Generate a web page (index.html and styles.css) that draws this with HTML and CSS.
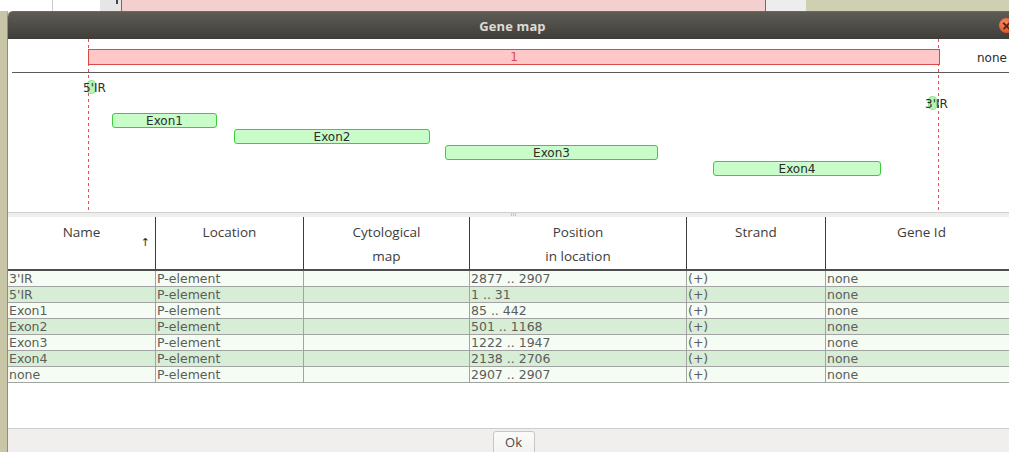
FILE: index.html
```html
<!DOCTYPE html>
<html>
<head>
<meta charset="utf-8">
<title>Gene map</title>
<link rel="stylesheet" href="styles.css">
</head>
<body>
<div class="screen">
  <div class="behind">
    <span class="bh-white"></span>
    <span class="bh-rule"></span>
    <span class="bh-white2"></span>
    <span class="bh-cell"><span class="bh-mark"></span></span>
    <span class="bh-pink"></span>
    <span class="bh-cell2"><span class="bh-mark wide"></span></span>
    <span class="bh-khaki"></span>
  </div>
  <div class="main">
    <div class="side"></div>
    <div class="window">
      <div class="titlebar">
        <span class="title">Gene map</span>
        <span class="close"></span>
      </div>

      <div class="map">
        <div class="vline vline-start"></div>
        <div class="vline vline-end"></div>
        <div class="locus">1</div>
        <div class="locus-name">none</div>
        <div class="axis"><span class="axis-head"></span></div>

        <div class="feat feat-small ir5"></div>
        <div class="feat-label ir5-label">5'IR</div>
        <div class="feat feat-small ir3"></div>
        <div class="feat-label ir3-label">3'IR</div>

        <div class="feat exon1">Exon1</div>
        <div class="feat exon2">Exon2</div>
        <div class="feat exon3">Exon3</div>
        <div class="feat exon4">Exon4</div>
      </div>

      <div class="splitter"><span class="grip"></span></div>

      <div class="table">
        <div class="thead">
          <div class="th">Name<span class="sort">↑</span></div>
          <div class="th">Location</div>
          <div class="th">Cytological<br>map</div>
          <div class="th">Position<br>in location</div>
          <div class="th">Strand</div>
          <div class="th">Gene Id</div>
        </div>
        <div class="tbody">
          <div class="tr">
            <div class="td">3'IR</div><div class="td">P-element</div><div class="td"></div>
            <div class="td">2877 .. 2907</div><div class="td">(+)</div><div class="td">none</div>
          </div>
          <div class="tr">
            <div class="td">5'IR</div><div class="td">P-element</div><div class="td"></div>
            <div class="td">1 .. 31</div><div class="td">(+)</div><div class="td">none</div>
          </div>
          <div class="tr">
            <div class="td">Exon1</div><div class="td">P-element</div><div class="td"></div>
            <div class="td">85 .. 442</div><div class="td">(+)</div><div class="td">none</div>
          </div>
          <div class="tr">
            <div class="td">Exon2</div><div class="td">P-element</div><div class="td"></div>
            <div class="td">501 .. 1168</div><div class="td">(+)</div><div class="td">none</div>
          </div>
          <div class="tr">
            <div class="td">Exon3</div><div class="td">P-element</div><div class="td"></div>
            <div class="td">1222 .. 1947</div><div class="td">(+)</div><div class="td">none</div>
          </div>
          <div class="tr">
            <div class="td">Exon4</div><div class="td">P-element</div><div class="td"></div>
            <div class="td">2138 .. 2706</div><div class="td">(+)</div><div class="td">none</div>
          </div>
          <div class="tr">
            <div class="td">none</div><div class="td">P-element</div><div class="td"></div>
            <div class="td">2907 .. 2907</div><div class="td">(+)</div><div class="td">none</div>
          </div>
        </div>
      </div>

      <div class="footer">
        <button class="ok">Ok</button>
      </div>
    </div>
  </div>
</div>
</body>
</html>
```

FILE: styles.css
```css
* { box-sizing: border-box; }

html, body {
  margin: 0;
  padding: 0;
  background: #ffffff;
}

.screen {
  width: 1009px;
  height: 452px;
  overflow: hidden;
  display: flex;
  flex-direction: column;
  font-family: "Open Sans", "DejaVu Sans", sans-serif;
}

/* strip of the window lying underneath */
.behind {
  height: 11px;
  flex: none;
  display: flex;
  background: #ffffff;
}
.bh-white { width: 52px; }
.bh-rule { width: 1px; background: #c9c9c9; }
.bh-white2 { width: 47px; }
.bh-cell {
  width: 21px;
  background: #e6e6e6;
  display: flex;
  justify-content: flex-end;
  padding-right: 3px;
}
.bh-mark {
  width: 2px;
  height: 4px;
  background: #444;
}
.bh-mark.wide {
  width: 26px;
  height: 2px;
  margin-left: 3px;
  background: repeating-linear-gradient(to right, #555 0 4px, transparent 4px 7px);
}
.bh-pink {
  width: 645px;
  background: #f3cfcf;
  border-left: 1px solid #d04040;
  border-right: 1px solid #d04040;
}
.bh-cell2 {
  width: 40px;
  background: #ededed;
}
.bh-khaki {
  flex: 1;
  background: #cfcfb2;
}

.main {
  flex: 1;
  display: flex;
  min-height: 0;
}

.side {
  width: 8px;
  flex: none;
  background: #c8c6a6;
  border-right: 1px solid #b3b195;
}

.window {
  width: 1010px;
  flex: none;
  display: flex;
  flex-direction: column;
  background: #ffffff;
  border-left: 1px solid #8f8d7d;
  border-radius: 6px 6px 0 0;
  overflow: hidden;
  margin-left: -1px;
}

.titlebar {
  height: 28px;
  flex: none;
  position: relative;
  display: flex;
  align-items: center;
  justify-content: center;
  background: linear-gradient(#5f5c56, #3e3d39);
  border-top: 1px solid #6c6963;
}
.title {
  color: #dfdbd2;
  font-family: "Open Sans", "DejaVu Sans", sans-serif;
  font-weight: 700;
  font-size: 13px;
  letter-spacing: 0.1px;
}
.close {
  position: absolute;
  right: 3px;
  top: 6px;
  width: 15px;
  height: 15px;
  border-radius: 50%;
  background: radial-gradient(circle at 40% 35%, #f79063, #e2572b 70%, #c94a22);
}
.close::before,
.close::after {
  content: "";
  position: absolute;
  left: 3px;
  top: 7px;
  width: 9px;
  height: 1.5px;
  background: #5a2a16;
  transform: rotate(45deg);
}
.close::after { transform: rotate(-45deg); }

/* gene map drawing area */
.map {
  height: 173px;
  flex: none;
  position: relative;
  background: #ffffff;
  font-family: "DejaVu Sans", sans-serif;
  font-size: 12px;
  color: #2a2a2a;
}
.vline {
  position: absolute;
  top: 0;
  bottom: 0;
  width: 1px;
  background: repeating-linear-gradient(to bottom, #e0505a 0 3px, transparent 3px 6px);
}
.vline-start { left: 80px; }
.vline-end { left: 930px; }

.locus {
  position: absolute;
  left: 80px;
  top: 10px;
  width: 852px;
  height: 16px;
  background: #ffc8c8;
  border: 1px solid #dc4848;
  color: #d84a4a;
  text-align: center;
  line-height: 14px;
}
.locus-name {
  position: absolute;
  left: 969px;
  top: 12px;
  line-height: 14px;
}
.axis {
  position: absolute;
  left: 4px;
  right: 0;
  top: 33px;
  height: 1px;
  background: #5a5a5a;
}
.axis-head {
  position: absolute;
  right: 2px;
  top: -3px;
  width: 6px;
  height: 6px;
  border-right: 1px solid #5a5a5a;
  border-top: 1px solid #5a5a5a;
  transform: rotate(45deg);
}

.feat {
  position: absolute;
  height: 15px;
  background: #c8fcc8;
  border: 1px solid #3ccc3c;
  border-radius: 3px;
  text-align: center;
  line-height: 14px;
  color: #2c2c2c;
}
.feat-small {
  width: 9px;
  height: 14px;
  border-radius: 4px;
  background: #b8f4b8;
  border-color: #8ee48e;
}
.feat-label {
  position: absolute;
  line-height: 14px;
  color: #2c2c2c;
}
.ir5 { left: 79px; top: 41px; }
.ir5-label { left: 75px; top: 42px; }
.ir3 { left: 920px; top: 57px; }
.ir3-label { left: 917px; top: 58px; }

.exon1 { left: 104px; top: 74px; width: 105px; }
.exon2 { left: 226px; top: 90px; width: 196px; }
.exon3 { left: 437px; top: 106px; width: 213px; }
.exon4 { left: 705px; top: 122px; width: 168px; }

.splitter {
  height: 5px;
  flex: none;
  background: #eeeeec;
  border-top: 1px solid #cfcfcd;
  display: flex;
  justify-content: center;
}
.grip {
  width: 5px;
  height: 3px;
  margin-left: 2px;
  background: repeating-linear-gradient(to right, #c4c4c2 0 1px, transparent 1px 2px);
}

/* feature table */
.table {
  flex: 1;
  display: flex;
  flex-direction: column;
  background: #ffffff;
}
.thead, .tr {
  display: grid;
  grid-template-columns: 148px 148px 166px 217px 139px 1fr;
}
.thead {
  height: 54px;
  border-bottom: 2px solid #4e4e4e;
}
.th {
  position: relative;
  border-right: 1px solid #3c3c3c;
  text-align: center;
  line-height: 24px;
  padding-top: 3px;
  color: #3c3c3c;
  font-size: 13.5px;
}
.th:last-child { border-right: none; }
.sort {
  position: absolute;
  right: 5px;
  top: 20px;
  font-family: "DejaVu Sans", sans-serif;
  font-size: 11px;
  line-height: 12px;
  color: #2a2a2a;
}

.tr {
  height: 16px;
  border-bottom: 1px solid #a3a3a3;
  color: #5c5c5c;
  font-family: "DejaVu Sans", sans-serif;
  font-size: 12.5px;
}
.tr:nth-child(odd) { background: #f4fcf3; }
.tr:nth-child(even) { background: #d7edd5; }
.td {
  border-right: 1px solid #a3a3a3;
  padding-left: 1px;
  line-height: 15px;
  white-space: nowrap;
}
.td:last-child { border-right: none; }

.footer {
  height: 24px;
  flex: none;
  background: #f0efee;
  border-top: 1px solid #cdcdcb;
  display: flex;
  justify-content: center;
  padding-top: 2px;
}
.ok {
  width: 42px;
  height: 26px;
  margin-left: 2px;
  border: 1px solid #c6c6c4;
  border-radius: 3px;
  background: linear-gradient(#fbfbfa, #f1f1f0);
  font-family: "Open Sans", "DejaVu Sans", sans-serif;
  font-size: 13px;
  color: #4a4a4a;
  line-height: 18px;
  display: flex;
  justify-content: center;
  padding: 1px 0 0;
}
```
